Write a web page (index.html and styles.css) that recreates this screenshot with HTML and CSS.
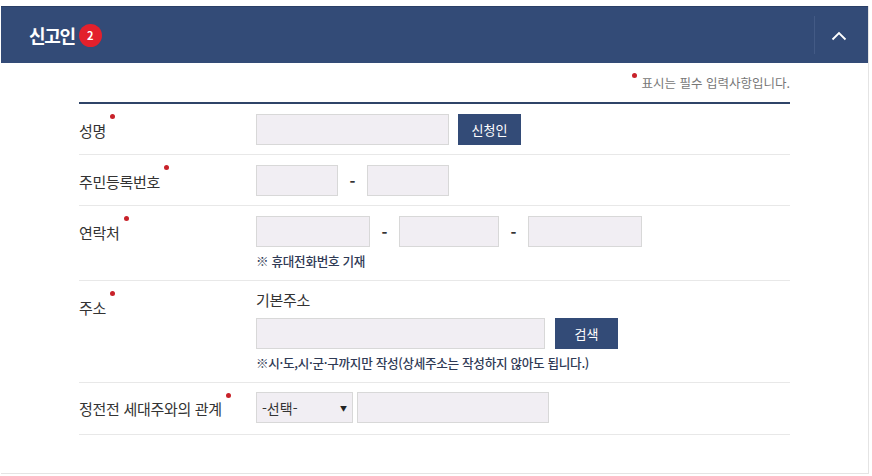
FILE: index.html
```html
<!DOCTYPE html>
<html lang="ko">
<head>
    <meta charset="UTF-8">
    <title>신고인</title>
    <link rel="stylesheet" href="styles.css">
</head>
<body>
    <div class="panel">
        <div class="panel-head">
            <h2>신고인</h2>
            <span class="badge">2</span>
            <div class="toggle">
                <svg width="16" height="10" viewBox="0 0 16 10"><path d="M1.500 8.500L8 2l6.500 6.500" fill="none" stroke="#fff" stroke-width="1.800"/></svg>
            </div>
        </div>
        <div class="panel-body">
            <p class="required-note"><span class="dot"></span>표시는 필수 입력사항입니다.</p>
            <div class="form">
                <div class="row">
                    <div class="label">성명<span class="dot"></span></div>
                    <div class="field">
                        <div class="line">
                            <input class="input w-name" type="text">
                            <button class="button btn-applicant">신청인</button>
                        </div>
                    </div>
                </div>
                <div class="row">
                    <div class="label">주민등록번호<span class="dot"></span></div>
                    <div class="field">
                        <div class="line">
                            <input class="input w-short" type="text">
                            <span class="dash">-</span>
                            <input class="input w-short" type="text">
                        </div>
                    </div>
                </div>
                <div class="row">
                    <div class="label">연락처<span class="dot"></span></div>
                    <div class="field">
                        <div class="line">
                            <input class="input w-tel" type="text">
                            <span class="dash">-</span>
                            <input class="input w-mid" type="text">
                            <span class="dash">-</span>
                            <input class="input w-tel" type="text">
                        </div>
                        <p class="hint">※ 휴대전화번호 기재</p>
                    </div>
                </div>
                <div class="row">
                    <div class="label">주소<span class="dot"></span></div>
                    <div class="field">
                        <p class="sub-label">기본주소</p>
                        <div class="line">
                            <input class="input w-addr" type="text">
                            <button class="button btn-search">검색</button>
                        </div>
                        <p class="hint">※시·도,시·군·구까지만 작성(상세주소는 작성하지 않아도 됩니다.)</p>
                    </div>
                </div>
                <div class="row row-last">
                    <div class="label">정전전 세대주와의 관계<span class="dot"></span></div>
                    <div class="field">
                        <div class="line line-tight">
                            <div class="select">-선택-<span class="arrow">▼</span></div>
                            <input class="input w-rel" type="text">
                        </div>
                    </div>
                </div>
            </div>
        </div>
    </div>
</body>
</html>
```

FILE: styles.css
```css
body {
    margin: 0;
    padding: 6px 3px 0 1px;
    background: #fff;
    font-family: "Noto Sans CJK KR", "Noto Sans", sans-serif;
    color: #333;
}
p {
    margin: 0;
}
.panel {
    height: 468px;
    box-sizing: border-box;
    border: 1px solid #e4e4e4;
    border-top: 0;
    border-left: 0;
}
.panel-head {
    display: flex;
    align-items: center;
    height: 57px;
    padding-left: 28px;
    background: #334b77;
    border-top: 1px solid #2a3f66;
    box-sizing: border-box;
    color: #fff;
}
.panel-head h2 {
    margin: 0;
    font-size: 18px;
    font-weight: 700;
    letter-spacing: -1.300px;
}
.badge {
    width: 23px;
    height: 23px;
    margin-left: 4px;
    border-radius: 50%;
    background: #e3202c;
    font-size: 11px;
    font-weight: 700;
    line-height: 23px;
    text-align: center;
}
.toggle {
    display: flex;
    align-items: center;
    justify-content: center;
    width: 48px;
    height: 36px;
    margin-left: auto;
    padding: 2px 5px 0 0;
    border-left: 1px solid #435a85;
}
.panel-body {
    padding: 0 78px;
}
.dot {
    display: inline-block;
    width: 5px;
    height: 5px;
    border-radius: 50%;
    background: #c8222a;
    vertical-align: top;
}
.required-note {
    height: 39px;
    padding-top: 10px;
    box-sizing: border-box;
    font-size: 12.500px;
    line-height: 20px;
    color: #777;
    text-align: right;
}
.required-note .dot {
    margin: 0 5px 0 0;
}
.form {
    border-top: 2px solid #2f4468;
}
.row {
    display: grid;
    grid-template-columns: 177px 1fr;
    padding: 10px 0 9px;
    border-bottom: 1px solid #e8e8e8;
}
.row-last {
    padding: 9px 0 11px;
}
.label {
    align-self: start;
    height: 31px;
    font-size: 15px;
    line-height: 33px;
    letter-spacing: -0.3px;
}
.label .dot {
    margin: 0 0 0 4px;
}
.row-last .label .dot {
    margin-top: 1px;
}
.line {
    display: flex;
    align-items: center;
}
.line-tight {
    gap: 4px;
}
.input {
    height: 31px;
    box-sizing: border-box;
    padding: 0;
    background: #f1eef3;
    border: 1px solid #d8d8d8;
}
.w-name { width: 193px; }
.w-rel { width: 192px; }
.w-short { width: 82px; }
.w-tel { width: 114px; }
.w-mid { width: 100px; }
.w-addr { width: 289px; }
.dash {
    width: 29px;
    font-size: 16px;
    font-weight: 700;
    text-align: center;
    color: #333;
}
.button {
    width: 63px;
    height: 31px;
    padding: 0;
    border: 0;
    background: #334b77;
    color: #fff;
    font-family: inherit;
    font-size: 13px;
}
.btn-applicant { margin-left: 9px; }
.btn-search { margin-left: 10px; }
.hint {
    margin-top: 4px;
    font-size: 12.600px;
    font-weight: 500;
    line-height: 20px;
    color: #2f3a55;
    letter-spacing: -0.3px;
}
.sub-label {
    height: 27px;
    margin: -1px 0 1px;
    font-size: 15px;
    line-height: 20px;
    letter-spacing: -0.3px;
}
.select {
    display: flex;
    align-items: center;
    justify-content: space-between;
    width: 97px;
    height: 31px;
    box-sizing: border-box;
    padding: 0 5px;
    background: #f1eef3;
    border: 1px solid #d8d8d8;
    font-size: 14px;
}
.arrow {
    font-size: 7px;
    color: #222;
}
```
